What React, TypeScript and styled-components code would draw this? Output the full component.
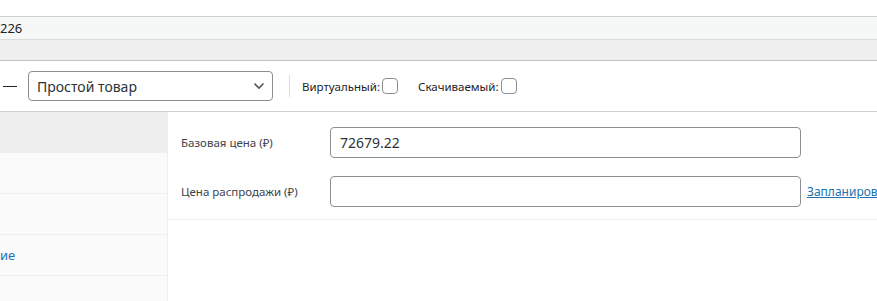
import React, { FC } from 'react';
import styled, { createGlobalStyle } from 'styled-components';

const GlobalStyle = createGlobalStyle`
    html, body {
        margin: 0;
        padding: 0;
        background: #fff;
        overflow: hidden;
    }
    body {
        font-family: "Noto Sans", "Open Sans", sans-serif;
        color: #1d2327;
    }
`;

const Page = styled.div`
    width: 877px;
    height: 301px;
    overflow: hidden;
    padding-top: 16px;
    box-sizing: border-box;
`;

const TitleBar = styled.div`
    height: 22px;
    border-top: 1px solid #d0d0d0;
    border-bottom: 1px solid #dcdcde;
    background: #f6f7f7;
    font-size: 13px;
    line-height: 22px;
    color: #1d2327;
    white-space: nowrap;
`;

const Strip = styled.div`
    height: 20px;
    background: #f0f0f1;
    border-bottom: 1px solid #c3c4c7;
`;

const Toolbar = styled.div`
    height: 50px;
    display: flex;
    align-items: center;
    border-bottom: 1px solid #d0d0d0;
    white-space: nowrap;
`;

const Dash = styled.span`
    display: inline-block;
    width: 14px;
    height: 1px;
    background: #1d2327;
    margin: 0 11px 0 3px;
`;

const SelectBox = styled.div`
    width: 245px;
    height: 30px;
    box-sizing: border-box;
    border: 1px solid #8c8f94;
    border-radius: 4px;
    display: flex;
    align-items: center;
    justify-content: space-between;
    padding: 0 7px 0 8px;
    font-size: 14px;
    color: #2c3338;
`;

const Separator = styled.span`
    width: 1px;
    height: 22px;
    background: #e0e0e0;
    margin: 0 12px 0 16px;
`;

const CheckLabel = styled.label`
    display: flex;
    align-items: center;
    font-size: 11.5px;
    color: #1d2327;
    margin-right: 20px;
`;

const CheckBox = styled.span`
    width: 16px;
    height: 16px;
    box-sizing: border-box;
    border: 1px solid #8c8f94;
    border-radius: 4px;
    margin-left: 2px;
    background: #fff;
`;

const Body = styled.div`
    display: flex;
    height: 190px;
`;

const Tabs = styled.ul`
    list-style: none;
    margin: 0;
    padding: 0;
    width: 167px;
    flex-shrink: 0;
    border-right: 1px solid #eee;
    background: #fafafa;
`;

const Tab = styled.li<{ $active?: boolean }>`
    height: 40px;
    border-bottom: 1px solid #eee;
    background: ${p => (p.$active ? '#eee' : '#fafafa')};
    font-size: 13px;
    line-height: 40px;
    color: #2271b1;
    white-space: nowrap;
`;

const Panel = styled.div`
    flex: 1;
    min-width: 0;
`;

const FieldGroup = styled.div`
    padding: 15px 0 13px;
    border-bottom: 1px solid #eee;
`;

const Field = styled.div`
    display: flex;
    align-items: center;
    height: 30px;
    padding-left: 13px;
    & + & {
        margin-top: 19px;
    }
`;

const Label = styled.span`
    width: 149px;
    flex-shrink: 0;
    font-size: 11.5px;
    color: #3c434a;
`;

const Input = styled.div`
    width: 471px;
    height: 31px;
    flex-shrink: 0;
    box-sizing: border-box;
    border: 1px solid #8c8f94;
    border-radius: 4px;
    padding: 0 9px;
    display: flex;
    align-items: center;
    font-size: 14px;
    color: #2c3338;
`;

const Link = styled.a`
    margin-left: 6px;
    flex-shrink: 0;
    font-size: 12px;
    color: #2271b1;
    text-decoration: underline;
    white-space: nowrap;
`;

const Chevron: FC = () => (
    <svg width="12" height="8" viewBox="0 0 12 8">
        <path d="M1.5 1.5 L6 6 L10.5 1.5" fill="none" stroke="#50575e" strokeWidth="1.6" />
    </svg>
);

const App: FC = () => {
    return (
        <Page>
            <GlobalStyle />
            <TitleBar>226</TitleBar>
            <Strip />
            <Toolbar>
                <Dash />
                <SelectBox>
                    <span>Простой товар</span>
                    <Chevron />
                </SelectBox>
                <Separator />
                <CheckLabel>Виртуальный:<CheckBox /></CheckLabel>
                <CheckLabel>Скачиваемый:<CheckBox /></CheckLabel>
            </Toolbar>
            <Body>
                <Tabs>
                    <Tab $active />
                    <Tab />
                    <Tab />
                    <Tab>ие</Tab>
                    <Tab />
                </Tabs>
                <Panel>
                    <FieldGroup>
                        <Field>
                            <Label>Базовая цена (₽)</Label>
                            <Input>72679.22</Input>
                        </Field>
                        <Field>
                            <Label>Цена распродажи (₽)</Label>
                            <Input />
                            <Link href="#">Запланиров</Link>
                        </Field>
                    </FieldGroup>
                </Panel>
            </Body>
        </Page>
    );
};

export default App;
